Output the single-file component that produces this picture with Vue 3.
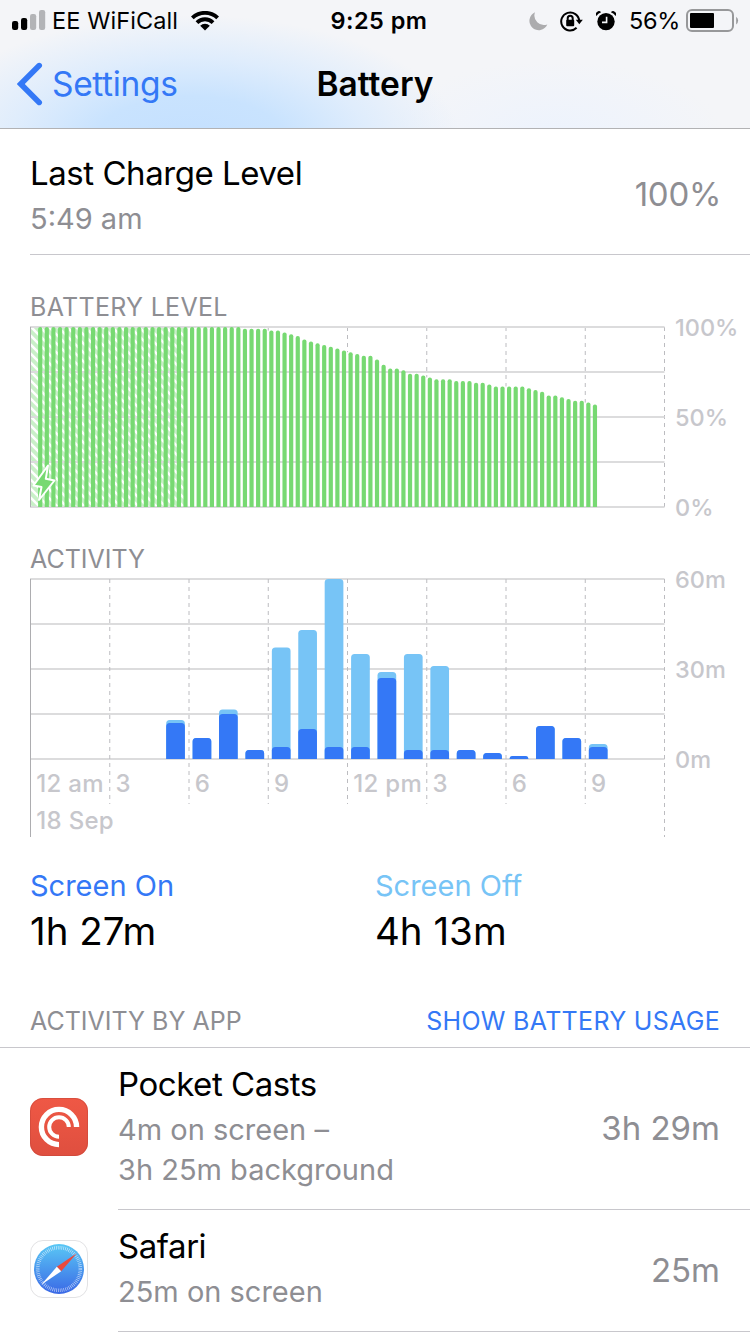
<script setup>
const plotWidth = 634;
const plotHeight = 180;
const hourWidth = plotWidth / 24;
const slotWidth = plotWidth / 96;

// one entry for each quarter of an hour, starting at 12:15 am
const levels = [
  ...Array(31).fill(100),
  99, 99, 99, 99, 98, 98, 97, 96, 95, 93, 92, 91, 90, 89, 88, 87, 86, 85, 84,
  84, 82, 79, 77, 77, 76, 74, 74, 73, 72, 71, 71, 71, 70, 70, 70, 69, 69, 68,
  67, 67, 67, 67, 67, 66, 65, 64, 62, 62, 61, 60, 59, 59, 58, 57,
];

// minutes of use in each hour
const activity = [
  { hour: 5, total: 13, on: 12 },
  { hour: 6, total: 7, on: 7 },
  { hour: 7, total: 16.5, on: 15 },
  { hour: 8, total: 3, on: 3 },
  { hour: 9, total: 37.2, on: 4 },
  { hour: 10, total: 43, on: 10 },
  { hour: 11, total: 60, on: 4 },
  { hour: 12, total: 35, on: 4 },
  { hour: 13, total: 29, on: 27 },
  { hour: 14, total: 35, on: 3 },
  { hour: 15, total: 31, on: 3 },
  { hour: 16, total: 3, on: 3 },
  { hour: 17, total: 2, on: 2 },
  { hour: 18, total: 1, on: 1 },
  { hour: 19, total: 11, on: 11 },
  { hour: 20, total: 7, on: 7 },
  { hour: 21, total: 5, on: 4 },
];

const hours = ["12 am", "3", "6", "9", "12 pm", "3", "6", "9"];
const rows = [0, 45, 90, 135, 180];

// bar with rounded top corners and a flat base
const barPath = (x, height, width, radius) => {
  const r = Math.min(radius, height);
  const top = 1 + plotHeight - height;
  return `M${x} ${plotHeight + 1}V${top + r}a${r} ${r} 0 0 1 ${r} ${-r}h${
    width - 2 * r
  }a${r} ${r} 0 0 1 ${r} ${r}V${plotHeight + 1}z`;
};

const levelBar = (level, i) =>
  barPath(0.5 + slotWidth * (i + 1) + 1, level * 1.8, 4.2, 2);

const activityBar = (hour, minutes) =>
  barPath(0.5 + hourWidth * hour + 3.6, minutes * 3, 18.7, 3.5);
</script>

<template>
  <main>
    <header>
      <div class="status">
        <div class="side">
          <svg class="signal" width="34" height="22" viewBox="0 0 34 22">
            <rect x="0" y="11" width="6.2" height="9" rx="2.2" />
            <rect x="9" y="8" width="6.2" height="12" rx="2.2" />
            <rect class="weak" x="18" y="4" width="6.2" height="16" rx="2.2" />
            <rect class="weak" x="27" y="0" width="6.2" height="20" rx="2.2" />
          </svg>
          <span class="carrier">EE WiFiCall</span>
          <svg class="wifi" width="28" height="20" viewBox="0 0 28 20">
            <path d="M0 5.6A20 20 0 0 1 28 5.6L25.3 8.3A16.1 16.1 0 0 0 2.7 8.3z" />
            <path d="M4.6 10.2A13.4 13.4 0 0 1 23.4 10.2L20.7 12.9A9.5 9.5 0 0 0 7.3 12.9z" />
            <path d="M9.2 14.8A6.9 6.9 0 0 1 18.8 14.8L14 19.6z" />
          </svg>
        </div>
        <span class="clock">9:25 pm</span>
        <div class="side right">
          <svg class="moon" width="19" height="19" viewBox="0 0 19 19">
            <path d="M6 .3A9.3 9.3 0 1 0 18.3 12.4A9.5 9.5 0 0 1 6 .3z" />
          </svg>
          <svg class="lock" width="23" height="21" viewBox="0 0 23 21">
            <path class="ring" d="M16.6 16.8A9 9 0 1 1 19.2 10" />
            <path d="M15.8 8.8H22.8L19.3 13.2z" />
            <rect x="6.2" y="8.8" width="8" height="6.4" rx="1" />
            <path class="shackle" d="M7.7 9.4V7.3a2.5 2.5 0 0 1 5 0v2.1" />
          </svg>
          <svg class="alarm" width="20" height="20" viewBox="0 0 20 20">
            <circle cx="10" cy="10.6" r="8.7" />
            <path d="M.4 4.9A9 9 0 0 1 5.1 1.2A3 3 0 0 0 .4 4.9zM19.6 4.9A9 9 0 0 0 14.9 1.2A3 3 0 0 1 19.6 4.9z" />
            <path class="hands" d="M10.6 5.8v5.6H6" />
          </svg>
          <span class="percent">56%</span>
          <svg class="cell" width="54" height="24" viewBox="0 0 54 24">
            <rect class="shell" x="1" y="1" width="46" height="21" rx="5" />
            <rect x="4" y="4" width="24" height="15" rx="1" />
            <path class="tip" d="M50.2 7.7a5 5 0 0 1 0 7.8z" />
          </svg>
        </div>
      </div>
      <nav>
        <button class="back">
          <svg width="26" height="44" viewBox="0 0 26 44">
            <path d="M22.2 3.6L3.8 22L22.2 40.4" />
          </svg>
          <span>Settings</span>
        </button>
        <h1>Battery</h1>
      </nav>
    </header>

    <section class="charge">
      <div>
        <h2>Last Charge Level</h2>
        <p>5:49 am</p>
      </div>
      <span class="amount full">100%</span>
    </section>

    <section class="chart">
      <h3 class="level-title">BATTERY LEVEL</h3>
      <div class="plot">
        <svg width="636" height="182" viewBox="0 0 636 182">
          <defs>
            <pattern id="hatch" width="9" height="9" patternUnits="userSpaceOnUse">
              <rect width="9" height="9" fill="#c9f0c8" />
              <path d="M-2 -2L11 11M-2 7L2 11M7 -2L11 2" stroke="#fff" stroke-width="2.6" />
            </pattern>
          </defs>
          <line
            v-for="n in 8"
            :key="n"
            class="tick"
            :x1="0.5 + n * 3 * hourWidth"
            :x2="0.5 + n * 3 * hourWidth"
            y1="1"
            :y2="181 - (levels[n * 12 - 1] || 0) * 1.8"
          />
          <rect class="charging" x="0" y="1" width="157" height="180" />
          <line
            v-for="row in rows"
            :key="row"
            class="row"
            x1="0"
            x2="634.5"
            :y1="row + 1"
            :y2="row + 1"
          />
          <line class="edge" x1="0.5" x2="0.5" y1="1" y2="181" />
          <path
            v-for="(level, i) in levels"
            :key="i"
            class="level"
            :d="levelBar(level, i)"
          />
          <path class="bolt" d="M18 139.5L3.5 159.5L11.5 161L9 174L24.5 154.5L15.8 152.8z" />
        </svg>
        <div class="scale">
          <span>100%</span>
          <span>50%</span>
          <span>0%</span>
        </div>
      </div>
    </section>

    <section class="chart">
      <h3 class="activity-title">ACTIVITY</h3>
      <div class="plot">
        <svg width="636" height="260" viewBox="0 0 636 260">
          <line
            v-for="row in rows"
            :key="row"
            class="row"
            x1="0"
            x2="634.5"
            :y1="row + 1"
            :y2="row + 1"
          />
          <line
            v-for="n in 8"
            :key="n"
            class="tick"
            :x1="0.5 + n * 3 * hourWidth"
            :x2="0.5 + n * 3 * hourWidth"
            y1="1"
            :y2="n === 8 ? 259 : 226"
          />
          <line class="edge" x1="0.5" x2="0.5" y1="1" y2="259" />
          <g v-for="bar in activity" :key="bar.hour">
            <path class="off" :d="activityBar(bar.hour, bar.total)" />
            <path class="on" :d="activityBar(bar.hour, bar.on)" />
          </g>
          <text
            v-for="(label, i) in hours"
            :key="i"
            :x="6.3 + i * 3 * hourWidth"
            y="214"
          >
            {{ label }}
          </text>
          <text x="6.3" y="250.5">18 Sep</text>
        </svg>
        <div class="scale">
          <span>60m</span>
          <span>30m</span>
          <span>0m</span>
        </div>
      </div>
    </section>

    <section class="totals">
      <div>
        <p class="screen-on">Screen On</p>
        <strong>1h 27m</strong>
      </div>
      <div>
        <p class="screen-off">Screen Off</p>
        <strong>4h 13m</strong>
      </div>
    </section>

    <section class="apps">
      <div class="apps-header">
        <h3>ACTIVITY BY APP</h3>
        <button>SHOW BATTERY USAGE</button>
      </div>
      <article class="pocket">
        <svg width="58" height="58" viewBox="0 0 58 58">
          <defs>
            <linearGradient id="red" x2="0" y2="1">
              <stop offset="0" stop-color="#ef5845" />
              <stop offset="1" stop-color="#df4f3f" />
            </linearGradient>
          </defs>
          <rect width="58" height="58" rx="13" fill="url(#red)" />
          <rect class="rim" x=".5" y=".5" width="57" height="57" rx="12.5" />
          <path class="arc" d="M29 46.6A17.6 17.6 0 1 1 46.6 29" stroke-width="5.4" />
          <path class="arc" d="M29 38.8A9.8 9.8 0 1 1 38.8 29" stroke-width="4" />
        </svg>
        <div class="details">
          <div>
            <h2>Pocket Casts</h2>
            <p>4m on screen –</p>
            <p>3h 25m background</p>
          </div>
          <span class="amount">3h 29m</span>
        </div>
      </article>
      <article class="safari">
        <svg width="58" height="58" viewBox="0 0 58 58">
          <defs>
            <linearGradient id="sky" x2="0" y2="1">
              <stop offset="0" stop-color="#5ac8f5" />
              <stop offset="1" stop-color="#3a68e6" />
            </linearGradient>
          </defs>
          <rect class="tile" x=".5" y=".5" width="57" height="57" rx="12.5" />
          <circle cx="29" cy="29" r="25" fill="url(#sky)" />
          <circle class="dial" cx="29" cy="29" r="21.3" />
          <path d="M46.8 13.2L26.8 26.8L31.2 31.2z" fill="#ea4a3d" />
          <path d="M11.2 44.8L26.8 26.8L31.2 31.2z" fill="#fff" />
        </svg>
        <div class="details">
          <div>
            <h2>Safari</h2>
            <p>25m on screen</p>
          </div>
          <span class="amount">25m</span>
        </div>
      </article>
    </section>
  </main>
</template>

<style>
body {
  background-color: #fff;
  overflow: hidden;
}
</style>

<style scoped>
main {
  width: 750px;
  height: 1334px;
  overflow: hidden;
  background-color: #fff;
  color: #000;
  font-family: Inter, "Liberation Sans", sans-serif;
}
h1,
h2,
h3,
p {
  margin: 0;
  font-weight: 400;
}
svg {
  display: block;
  flex: none;
}
button {
  border: none;
  padding: 0;
  background: none;
  font-family: inherit;
  color: #3478f6;
  cursor: pointer;
}
header {
  height: 128px;
  border-bottom: 1px solid #b2b2b4;
  background: radial-gradient(
      ellipse 270px 125px at 190px 140px,
      #c4e0ff 0%,
      #c9e3fe 35%,
      rgba(219, 235, 253, 0.85) 65%,
      rgba(240, 244, 250, 0) 100%
    ),
    radial-gradient(ellipse 170px 75px at 555px 135px, #edf3fd, #f4f5f800),
    #f4f5f8;
}
.status {
  display: flex;
  align-items: center;
  height: 42px;
  font-size: 23.5px;
}
.status span {
  margin-bottom: 2px;
}
.side {
  display: flex;
  align-items: center;
  flex: 1;
  padding-left: 12px;
}
.right {
  justify-content: flex-end;
  padding: 0 10px 0 0;
}
.weak {
  fill: #b3b4b7;
}
.status .carrier {
  margin-left: 6px;
  letter-spacing: 0.1px;
}
.wifi {
  margin-left: 13px;
}
.clock {
  padding-left: 6px;
  font-weight: 600;
  letter-spacing: 0.45px;
}
.moon {
  fill: #acacae;
}
.lock {
  margin-left: 12px;
}
.ring,
.shackle {
  fill: none;
  stroke: #000;
  stroke-width: 2;
}
.alarm {
  margin-left: 13px;
}
.hands {
  fill: none;
  stroke: #f4f5f8;
  stroke-width: 1.6;
}
.percent {
  margin-left: 13px;
  letter-spacing: -0.3px;
}
.cell {
  margin-left: 6px;
}
.shell {
  fill: none;
  stroke: #97989a;
  stroke-width: 2;
}
.tip {
  fill: #97989a;
}
nav {
  display: grid;
  grid-template-columns: 1fr auto 1fr;
  align-items: center;
  height: 84px;
  padding-left: 17px;
  padding-right: 17px;
}
.back {
  display: flex;
  align-items: center;
  gap: 9px;
  font-size: 33.5px;
  letter-spacing: -0.35px;
}
.back path {
  fill: none;
  stroke: #3478f6;
  stroke-width: 5.6;
  stroke-linecap: round;
}
h1 {
  font-size: 33.5px;
  font-weight: 600;
}
h2 {
  font-size: 33px;
  line-height: 46px;
  letter-spacing: -0.45px;
}
p {
  color: #8e8e93;
  font-size: 29px;
  line-height: 40px;
}
.amount {
  color: #8e8e93;
  font-size: 33px;
  line-height: 40px;
}
.charge {
  display: flex;
  justify-content: space-between;
  height: 104px;
  margin-left: 30px;
  padding: 21px 29px 0 0;
  border-bottom: 1px solid #c8c7cc;
}
.charge p {
  margin-top: 0;
  line-height: 46px;
}
.full {
  margin-top: 24px;
  letter-spacing: -0.3px;
}
h3 {
  color: #8e8e93;
  font-size: 25px;
  line-height: 30px;
}
.chart {
  padding-left: 30px;
}
.level-title {
  padding-top: 37px;
  letter-spacing: 0.3px;
}
.activity-title {
  padding-top: 36px;
}
.plot {
  display: flex;
  gap: 9px;
  margin-top: 4px;
}
.scale {
  display: flex;
  flex-direction: column;
  justify-content: space-between;
  height: 210px;
  margin-top: -13px;
  margin-bottom: -15px;
  color: #c7c7cc;
  font-size: 23.5px;
  font-weight: 500;
  line-height: 30px;
}
.row {
  stroke: #dcdcdd;
  stroke-width: 2;
}
.tick {
  stroke: #bcbcc0;
  stroke-width: 1;
  stroke-dasharray: 4 4;
}
.edge {
  stroke: #adadb0;
}
.charging {
  fill: url(#hatch);
}
.level {
  fill: #77d972;
}
.bolt {
  fill: #77d972;
  stroke: #fff;
  stroke-width: 2;
  stroke-linejoin: round;
}
.off {
  fill: #77c4f6;
}
.on {
  fill: #3478f6;
}
text {
  fill: #c7c7cc;
  font-size: 24px;
  font-weight: 500;
  letter-spacing: 0.3px;
}
.totals {
  display: grid;
  grid-template-columns: 345px 1fr;
  height: 93px;
  padding: 28px 0 0 30px;
}
.totals .screen-on {
  color: #3478f6;
}
.totals .screen-off {
  color: #77c4f6;
}
.totals strong {
  display: block;
  font-size: 38.5px;
  font-weight: 400;
  line-height: 50px;
}
.apps-header {
  display: flex;
  justify-content: space-between;
  height: 41px;
  padding: 47px 30px 0;
  border-bottom: 1px solid #c8c7cc;
}
.apps-header button {
  height: 30px;
  font-size: 25px;
  line-height: 30px;
  letter-spacing: 0.3px;
}
article {
  display: flex;
  align-items: center;
  gap: 30px;
  padding-left: 30px;
}
.details {
  display: flex;
  align-items: center;
  justify-content: space-between;
  flex: 1;
  box-sizing: border-box;
  padding-right: 30px;
  border-bottom: 1px solid #c8c7cc;
}
h2 + p {
  margin-top: 3px;
}
.pocket .details {
  height: 162px;
  padding-bottom: 7px;
}
.pocket .amount {
  padding-top: 5px;
}
.pocket > svg {
  margin-bottom: 4px;
}
.safari .details {
  height: 122px;
  padding-bottom: 6px;
}
.safari .amount {
  padding-top: 5px;
}
.safari > svg {
  margin-bottom: 4px;
}
.rim {
  fill: none;
  stroke: #c9473a;
  stroke-opacity: 0.6;
}
.arc {
  fill: none;
  stroke: #fff;
}
.tile {
  fill: #fff;
  stroke: #e2e2e4;
}
.dial {
  fill: none;
  stroke: #fff;
  stroke-opacity: 0.65;
  stroke-width: 3.6;
  stroke-dasharray: 0.7 1.16;
}
</style>
